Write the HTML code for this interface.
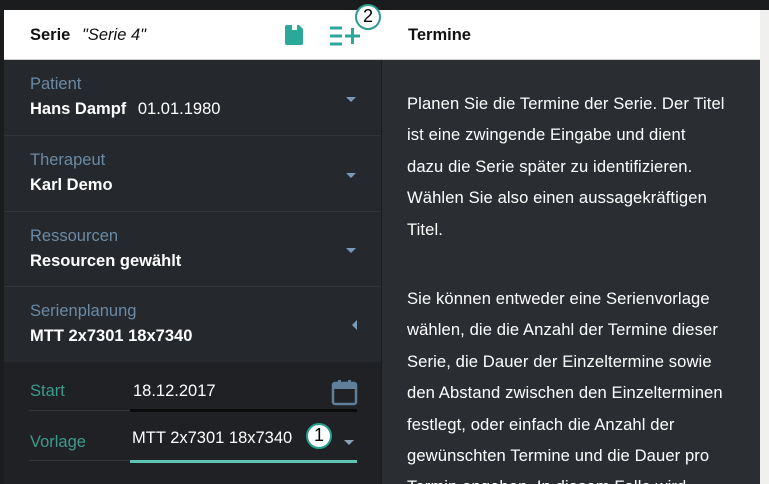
<!DOCTYPE html>
<html><head><meta charset="utf-8"><style>
*{margin:0;padding:0;box-sizing:border-box}
html{width:769px;height:484px;overflow:hidden}
body{width:769px;height:484px;overflow:hidden;background:#1b1c1d;font-family:"Liberation Sans","DejaVu Sans",sans-serif;position:relative}
.abs{position:absolute}
.hdr{left:4px;top:10px;width:756px;height:50px;background:#fff;border-bottom:1px solid #ccc}
.rightedge{left:760px;top:10px;width:9px;height:474px;background:#f2f0ee}
.lp{left:4px;top:60px;width:377px;height:424px;background:#25282c}
.lp2{left:4px;top:362px;width:377px;height:122px;background:#1f2124}
.rp{left:382px;top:60px;width:378px;height:424px;background:#2a2e33;overflow:hidden}
.sep{left:4px;width:377px;height:1px;background:#31353a}
.lbl{color:#6a8aa6;font-size:16.5px}
.val{color:#fff;font-size:16.5px;font-weight:bold}
.caret{width:0;height:0;border-left:5px solid transparent;border-right:5px solid transparent;border-top:5px solid #7a9ab8}
.txt{left:25px;width:360px;color:#fff;font-size:16.6px;line-height:31.4px;white-space:nowrap;letter-spacing:0.1px}
.badge{width:26px;height:26px;border-radius:50%;border:2.5px solid #2a9d8f;background:#fff;color:#000;font-size:18px;text-align:center;line-height:21px}
</style></head><body>
<div class="abs hdr"></div>
<div class="abs rightedge"></div>
<div class="abs" style="left:30px;top:26px;font-size:16.5px;font-weight:bold;color:#111">Serie</div>
<div class="abs" style="left:82px;top:26px;font-size:16.5px;font-style:italic;color:#111">"Serie 4"</div>
<svg class="abs" style="left:283px;top:24px" width="22" height="22" viewBox="0 0 22 22"><path d="M2 3a2 2 0 0 1 2-2h12l4 4v14a2 2 0 0 1-2 2H4a2 2 0 0 1-2-2z" fill="#2aa89a"/><rect x="9" y="1" width="5" height="5" fill="#fff"/></svg>
<svg class="abs" style="left:329px;top:25px" width="32" height="22" viewBox="0 0 32 22"><g stroke="#2aa89a" stroke-width="3"><path d="M1 3h12M1 11h12M1 19h12M16 11h15M23.5 3v16"/></g></svg>
<div class="abs badge" style="left:355px;top:4px">2</div>
<div class="abs" style="left:408px;top:26px;font-size:16.5px;font-weight:bold;color:#111">Termine</div>
<div class="abs lp"></div>
<div class="abs lp2"></div>
<div class="abs rp">
<div class="abs txt" style="top:28px">Planen Sie die Termine der Serie. Der Titel<br>ist eine zwingende Eingabe und dient<br>dazu die Serie später zu identifizieren.<br>Wählen Sie also einen aussagekräftigen<br>Titel.</div>
<div class="abs txt" style="top:223px">Sie können entweder eine Serienvorlage<br>wählen, die die Anzahl der Termine dieser<br>Serie, die Dauer der Einzeltermine sowie<br>den Abstand zwischen den Einzelterminen<br>festlegt, oder einfach die Anzahl der<br>gewünschten Termine und die Dauer pro<br>Termin angeben. In diesem Falle wird</div>
</div>
<div class="abs sep" style="top:135px"></div>
<div class="abs sep" style="top:211px"></div>
<div class="abs sep" style="top:286px"></div>
<div class="abs lbl" style="left:30px;top:75px">Patient</div>
<div class="abs val" style="left:30px;top:100px">Hans Dampf <span style="font-weight:normal;margin-left:7px">01.01.1980</span></div>
<div class="abs caret" style="left:346px;top:97px"></div>
<div class="abs lbl" style="left:30px;top:151px">Therapeut</div>
<div class="abs val" style="left:30px;top:176px">Karl Demo</div>
<div class="abs caret" style="left:346px;top:173px"></div>
<div class="abs lbl" style="left:30px;top:227px">Ressourcen</div>
<div class="abs val" style="left:30px;top:252px">Resourcen gewählt</div>
<div class="abs caret" style="left:346px;top:248px"></div>
<div class="abs lbl" style="left:30px;top:302px">Serienplanung</div>
<div class="abs val" style="left:30px;top:327px">MTT 2x7301 18x7340</div>
<div class="abs" style="left:352px;top:320px;width:0;height:0;border-top:5px solid transparent;border-bottom:5px solid transparent;border-right:5px solid #7a9ab8"></div>
<div class="abs" style="left:30px;top:382px;color:#3d9a8c;font-size:16.5px">Start</div>
<div class="abs" style="left:133px;top:382px;color:#fff;font-size:16.5px">18.12.2017</div>
<svg class="abs" style="left:331px;top:379px" width="27" height="27" viewBox="0 0 27 27"><rect x="2" y="4" width="23" height="21" rx="2" fill="none" stroke="#5f7f9a" stroke-width="2.5"/><rect x="2" y="4" width="23" height="6" fill="#5f7f9a"/><rect x="7" y="1" width="3" height="6" fill="#5f7f9a"/><rect x="17" y="1" width="3" height="6" fill="#5f7f9a"/></svg>
<div class="abs" style="left:29px;top:410px;width:328px;height:1px;background:#33373b"></div>
<div class="abs" style="left:130px;top:409px;width:227px;height:3px;background:#0a0a0a"></div>
<div class="abs" style="left:30px;top:433px;color:#3d9a8c;font-size:16.5px">Vorlage</div>
<div class="abs" style="left:132px;top:429px;color:#fff;font-size:16.5px">MTT 2x7301 18x7340</div>
<div class="abs badge" style="left:306px;top:423px">1</div>
<div class="abs caret" style="left:344px;top:440px;border-top-color:#8aa0b6"></div>
<div class="abs" style="left:29px;top:460px;width:328px;height:1px;background:#33373b"></div>
<div class="abs" style="left:130px;top:460px;width:227px;height:3px;background:#5fc4b4"></div>
</body></html>
